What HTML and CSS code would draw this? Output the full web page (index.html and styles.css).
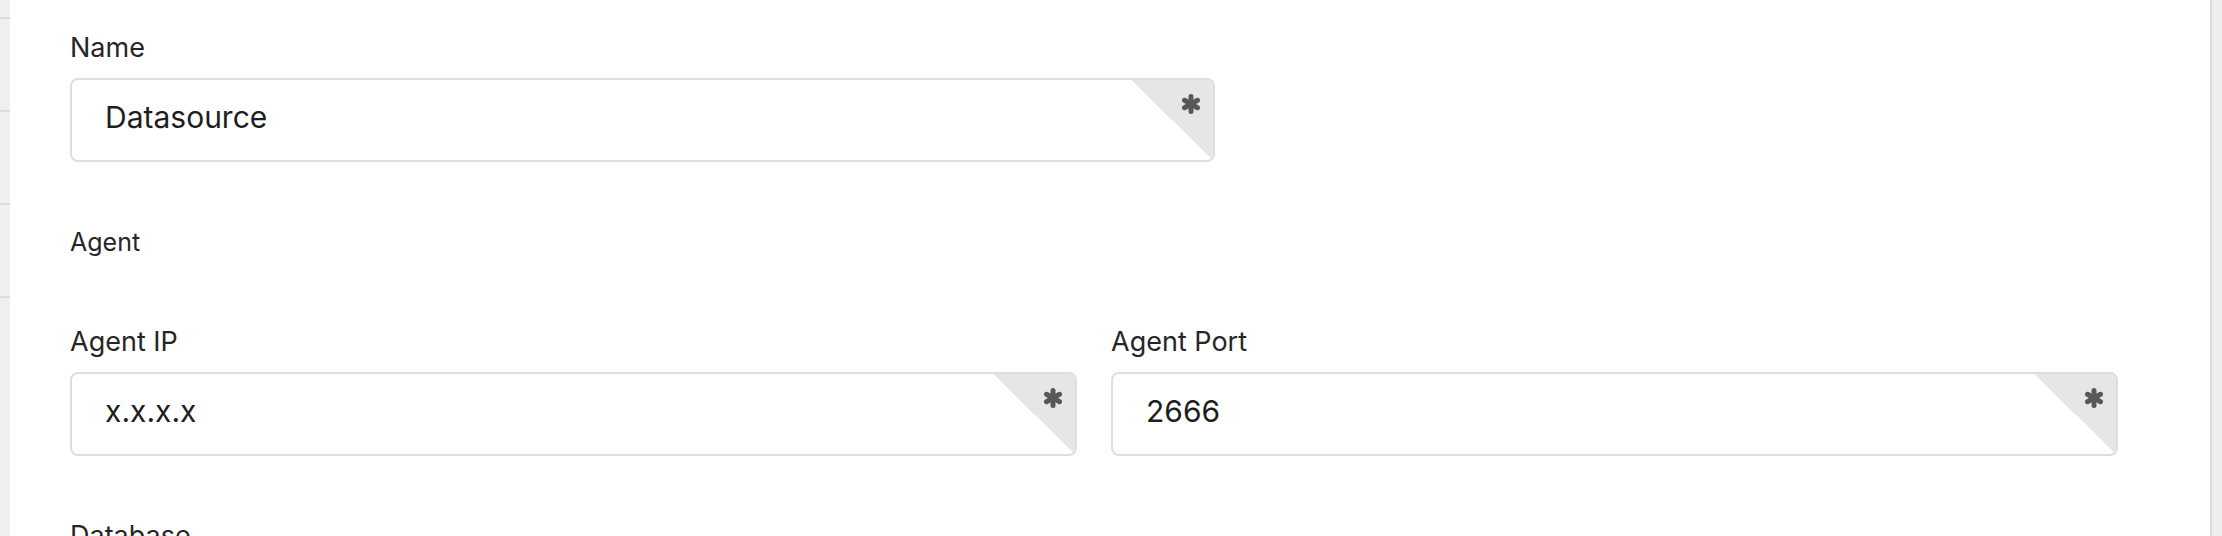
FILE: index.html
```html
<!DOCTYPE html>
<html lang="en">
<head>
<meta charset="utf-8">
<title>Datasource</title>
<link rel="stylesheet" href="styles.css">
</head>
<body>
<div class="page">
  <aside class="rail-left">
    <div class="rail-item rail-first"></div>
    <div class="rail-item"></div>
    <div class="rail-item"></div>
    <div class="rail-item"></div>
  </aside>
  <main class="form">
    <div class="field">
      <label class="label">Name</label>
      <div class="input input-name">
        <span class="value">Datasource</span>
        <span class="required"><svg viewBox="0 0 20 20" width="20" height="20"><g stroke="#585858" stroke-width="5" stroke-linecap="round"><line x1="10" y1="2.5" x2="10" y2="17.5"/><line x1="3.5" y1="6.25" x2="16.5" y2="13.75"/><line x1="3.5" y1="13.75" x2="16.5" y2="6.25"/></g></svg></span>
      </div>
    </div>
    <h3 class="section">Agent</h3>
    <div class="row">
      <div class="field">
        <label class="label">Agent IP</label>
        <div class="input">
          <span class="value">x.x.x.x</span>
          <span class="required"><svg viewBox="0 0 20 20" width="20" height="20"><g stroke="#585858" stroke-width="5" stroke-linecap="round"><line x1="10" y1="2.5" x2="10" y2="17.5"/><line x1="3.5" y1="6.25" x2="16.5" y2="13.75"/><line x1="3.5" y1="13.75" x2="16.5" y2="6.25"/></g></svg></span>
        </div>
      </div>
      <div class="field">
        <label class="label">Agent Port</label>
        <div class="input">
          <span class="value">2666</span>
          <span class="required"><svg viewBox="0 0 20 20" width="20" height="20"><g stroke="#585858" stroke-width="5" stroke-linecap="round"><line x1="10" y1="2.5" x2="10" y2="17.5"/><line x1="3.5" y1="6.25" x2="16.5" y2="13.75"/><line x1="3.5" y1="13.75" x2="16.5" y2="6.25"/></g></svg></span>
        </div>
      </div>
    </div>
    <h3 class="section section-db">Database</h3>
  </main>
  <aside class="rail-right"></aside>
</div>
</body>
</html>
```

FILE: styles.css
```css
* { box-sizing: border-box; }
html, body { margin: 0; padding: 0; background: #fff; }
body {
  font-family: Inter, "Open Sans", "Liberation Sans", sans-serif;
  color: #262626;
  overflow: hidden;
}
.page {
  display: flex;
  width: 2222px;
  height: 536px;
  overflow: hidden;
}
.rail-left {
  width: 10px;
  flex: none;
  background: #f0f0f0;
  display: flex;
  flex-direction: column;
}
.rail-item {
  height: 93px;
  border-bottom: 2px solid #dcdcdc;
  flex: none;
}
.rail-first { height: 19px; }
.rail-right {
  width: 12px;
  flex: none;
  background: linear-gradient(to right, #d8d8d8 0, #e6e6e6 2px, #eeeeee 4px, #efefef 100%);
}
.form {
  flex: 1;
  background: #fff;
  padding: 31px 92px 0 60px;
}
.label {
  display: block;
  font-size: 27px;
  line-height: 34px;
  color: #262626;
  margin: 0 0 13px;
}
.section {
  margin: 64px 0 67px;
  font-weight: 400;
  font-size: 25px;
  line-height: 32px;
  color: #262626;
}
.section-db { margin: 63px 0 0; font-size: 27px; line-height: 34px; }
.input {
  position: relative;
  height: 84px;
  border: 2px solid #dedede;
  border-radius: 8px;
  background: #fff;
  overflow: hidden;
  padding: 19px 33px 0;
}
.input-name { width: 1145px; }
.value {
  display: block;
  font-size: 30px;
  line-height: 36px;
  color: #1e1e1e;
}
.required {
  position: absolute;
  top: 0;
  right: 0;
  width: 82px;
  height: 100%;
  background: linear-gradient(to bottom left, #e6e6e6 50%, transparent 50%);
}
.required svg {
  position: absolute;
  top: 14px;
  right: 12px;
}
.row {
  display: grid;
  grid-template-columns: 1fr 1fr;
  column-gap: 34px;
}
```
